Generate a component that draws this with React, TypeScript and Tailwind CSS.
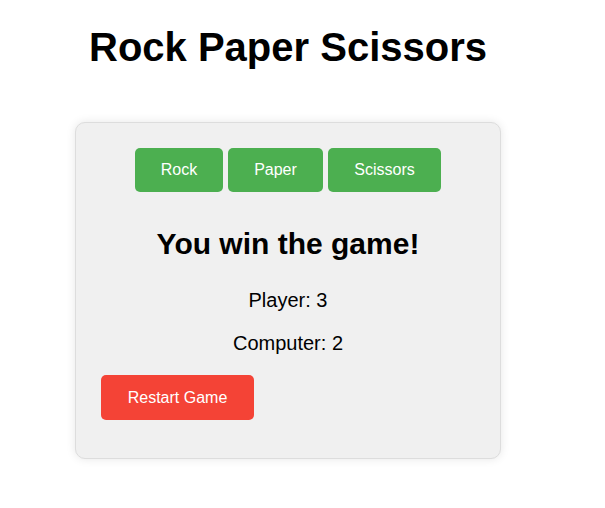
import React from "react";

export default function App() {
  return (
    <div className="min-h-[508px] w-[605px] bg-white text-black font-['Liberation_Sans',Arial,sans-serif]">
      <div className="ml-[75px] w-[426px] pt-[24px]">
        <h1 className="text-center text-[40px] leading-[46px] font-bold">Rock Paper Scissors</h1>
        <div className="mt-[52px] rounded-[10px] border border-[#dddddd] bg-[#f0f0f0] px-[25px] pt-[25px] pb-[38px] shadow-[0_0_10px_rgba(0,0,0,0.1)]">
          <div className="flex justify-center gap-[5px]">
            <button className="h-[44px] w-[88px] rounded-[5px] bg-[#4caf50] text-[16px] text-white">Rock</button>
            <button className="h-[44px] w-[95px] rounded-[5px] bg-[#4caf50] text-[16px] text-white">Paper</button>
            <button className="h-[44px] w-[113px] rounded-[5px] bg-[#4caf50] text-[16px] text-white">Scissors</button>
          </div>
          <h2 className="mt-[35px] text-center text-[30px] leading-[34px] font-bold">You win the game!</h2>
          <p className="mt-[28px] text-center text-[20px] leading-[23px]">Player: 3</p>
          <p className="mt-[20px] text-center text-[20px] leading-[23px]">Computer: 2</p>
          <button className="mt-[20px] h-[45px] w-[153px] rounded-[5px] bg-[#f44336] text-[16px] text-white">Restart Game</button>
        </div>
      </div>
    </div>
  );
}
